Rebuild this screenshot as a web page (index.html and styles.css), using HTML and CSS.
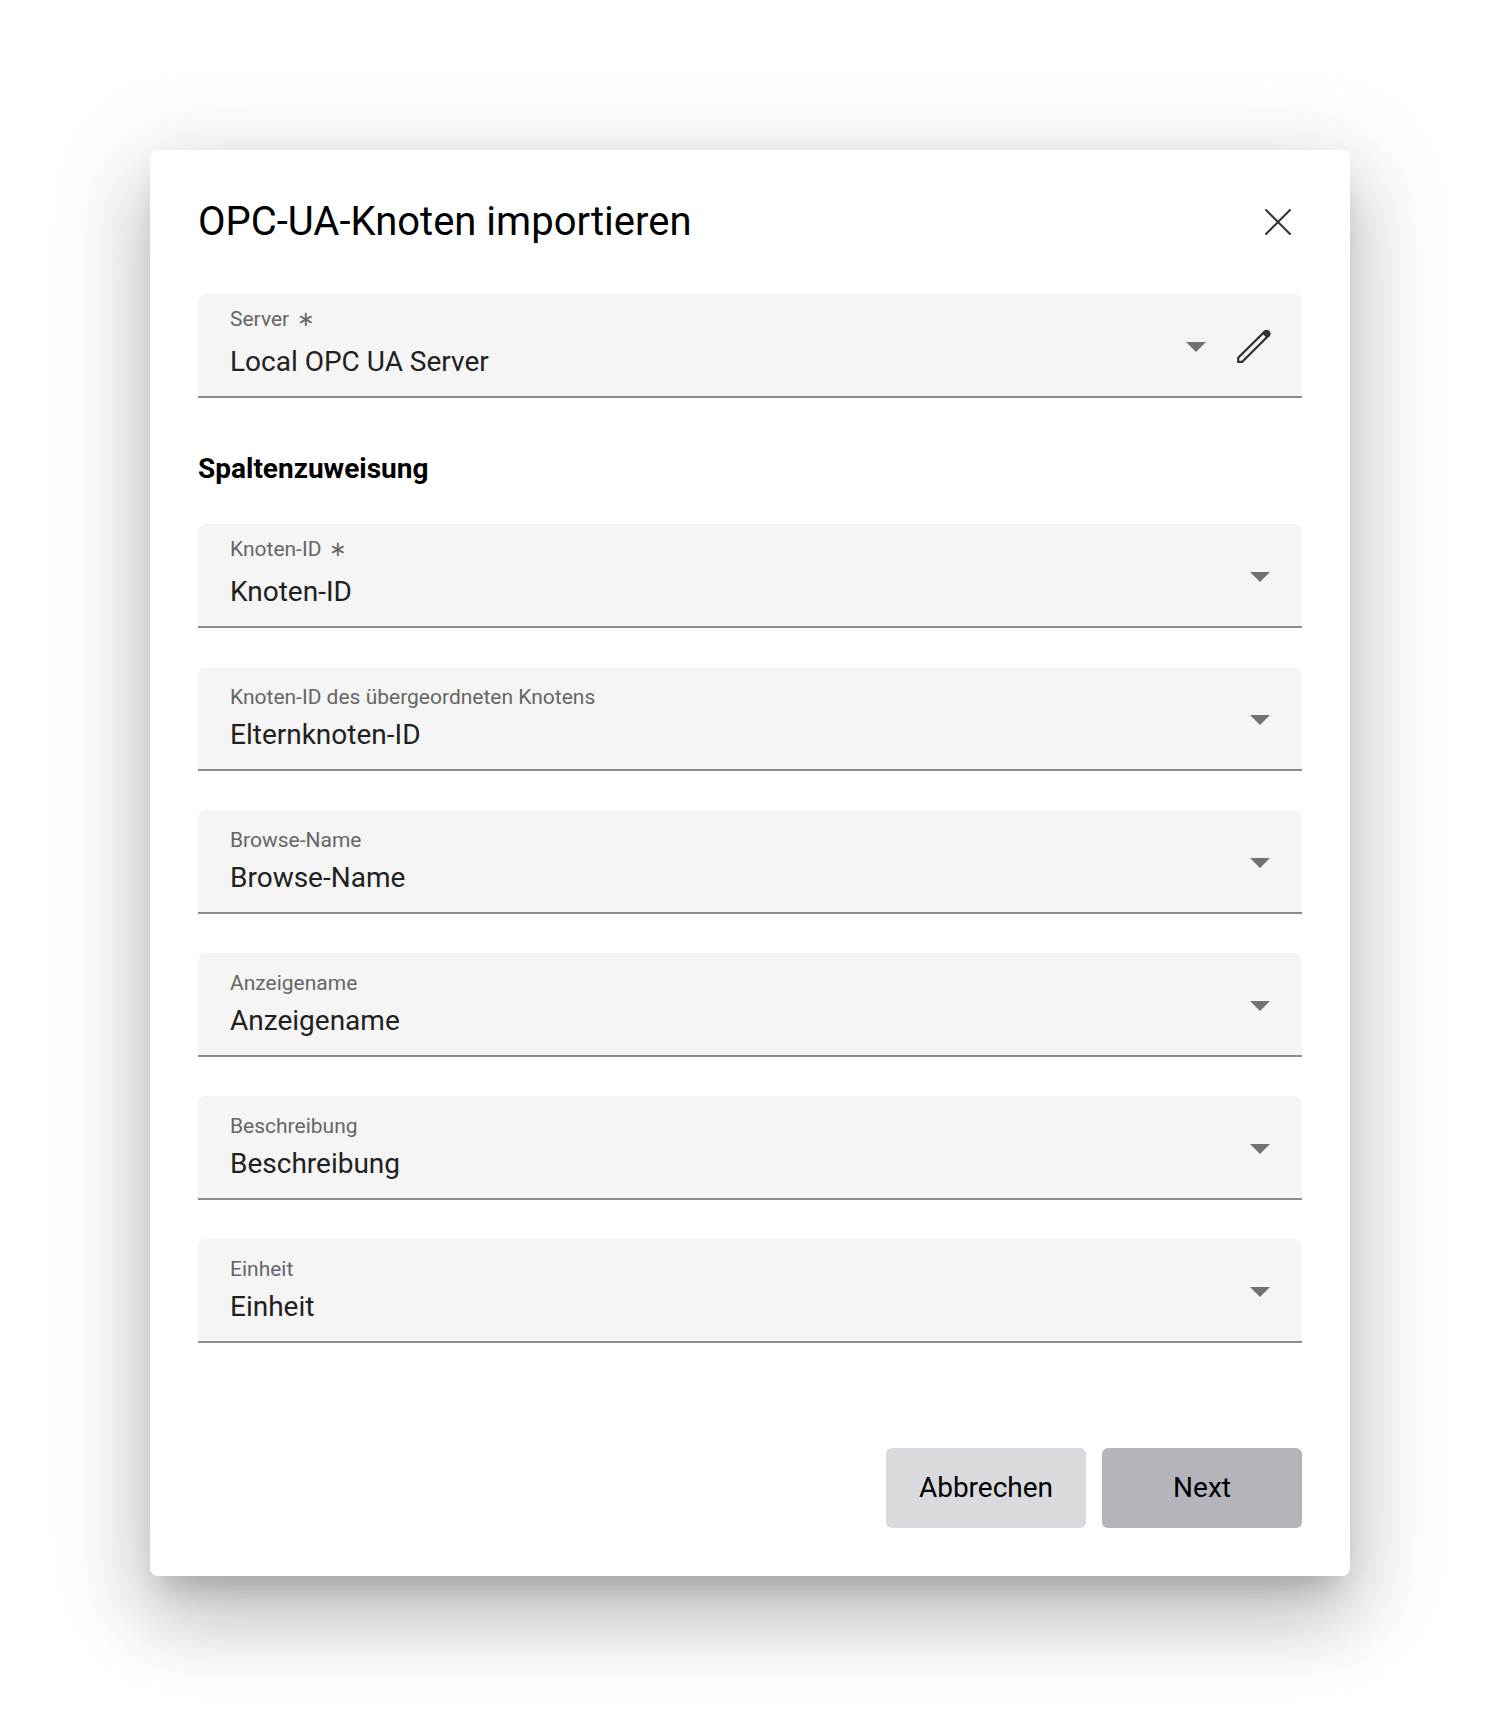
FILE: index.html
```html
<!DOCTYPE html>
<html lang="de">
<head>
<meta charset="utf-8">
<meta name="viewport" content="width=device-width, initial-scale=1">
<title>OPC-UA-Knoten importieren</title>
<link rel="stylesheet" href="styles.css">
</head>
<body>
<main class="dialog" role="dialog" aria-labelledby="dialog-title">
  <header class="dialog-header">
    <h1 class="dialog-title" id="dialog-title">OPC-UA-Knoten importieren</h1>
    <button class="icon-button close-button" type="button" aria-label="Schließen">
      <svg width="48" height="48" viewBox="0 0 48 48" fill="none" stroke="#323232" stroke-width="2" stroke-linecap="round"><path d="M12 12 36 36M36 12 12 36"/></svg>
    </button>
  </header>
  <form class="dialog-form">
    <div class="field field-required field-with-action">
      <label class="field-label" for="server">Server<span class="star">∗</span></label>
      <select class="field-select" id="server" required><option>Local OPC UA Server</option></select>
      <svg class="field-arrow" width="20" height="10" viewBox="0 0 20 10"><path d="M0 0h20L10 10z"/></svg>
      <button class="icon-button edit-button" type="button" aria-label="Bearbeiten">
        <svg width="36" height="36" viewBox="0 0 36 36"><path fill="none" stroke="#323232" stroke-width="2.200" d="M2.200 33.800v-4L28.600 3.600a2.900 2.900 0 0 1 4 4L6.200 33.800z"/><path fill="#323232" d="M25.900 5 28.400 2.500a4 4 0 0 1 5.500 5.500L30.900 10.200z"/></svg>
      </button>
    </div>
    <h2 class="section-title">Spaltenzuweisung</h2>
    <div class="field field-required">
      <label class="field-label" for="node-id">Knoten-ID<span class="star">∗</span></label>
      <select class="field-select" id="node-id" required><option>Knoten-ID</option></select>
      <svg class="field-arrow" width="20" height="10" viewBox="0 0 20 10"><path d="M0 0h20L10 10z"/></svg>
    </div>
    <div class="field">
      <label class="field-label" for="parent-id">Knoten-ID des übergeordneten Knotens</label>
      <select class="field-select" id="parent-id"><option>Elternknoten-ID</option></select>
      <svg class="field-arrow" width="20" height="10" viewBox="0 0 20 10"><path d="M0 0h20L10 10z"/></svg>
    </div>
    <div class="field">
      <label class="field-label" for="browse-name">Browse-Name</label>
      <select class="field-select" id="browse-name"><option>Browse-Name</option></select>
      <svg class="field-arrow" width="20" height="10" viewBox="0 0 20 10"><path d="M0 0h20L10 10z"/></svg>
    </div>
    <div class="field">
      <label class="field-label" for="display-name">Anzeigename</label>
      <select class="field-select" id="display-name"><option>Anzeigename</option></select>
      <svg class="field-arrow" width="20" height="10" viewBox="0 0 20 10"><path d="M0 0h20L10 10z"/></svg>
    </div>
    <div class="field">
      <label class="field-label" for="description">Beschreibung</label>
      <select class="field-select" id="description"><option>Beschreibung</option></select>
      <svg class="field-arrow" width="20" height="10" viewBox="0 0 20 10"><path d="M0 0h20L10 10z"/></svg>
    </div>
    <div class="field">
      <label class="field-label" for="unit">Einheit</label>
      <select class="field-select" id="unit"><option>Einheit</option></select>
      <svg class="field-arrow" width="20" height="10" viewBox="0 0 20 10"><path d="M0 0h20L10 10z"/></svg>
    </div>
    <footer class="dialog-actions">
      <button class="button button-secondary" type="button">Abbrechen</button>
      <button class="button button-primary" type="submit">Next</button>
    </footer>
  </form>
</main>
</body>
</html>
```
FILE: styles.css
```css
*, *::before, *::after { box-sizing: border-box; }

body {
  margin: 0;
  padding: 150px;
  background: #fff;
  color: #000;
  font-family: Roboto, "Liberation Sans", sans-serif;
}

.dialog {
  padding: 48px;
  border-radius: 8px;
  background: #fff;
  box-shadow:
    0 22px 30px -14px rgba(0, 0, 0, .2),
    0 48px 76px 6px rgba(0, 0, 0, .14),
    0 18px 92px 16px rgba(0, 0, 0, .12);
}

.dialog-header {
  display: flex;
  align-items: center;
  justify-content: space-between;
  margin-bottom: 48px;
}

.dialog-title {
  margin: 0;
  font-size: 40px;
  font-weight: 400;
  line-height: 48px;
}

.icon-button {
  display: block;
  padding: 0;
  border: 0;
  background: none;
  cursor: pointer;
}

.icon-button svg { display: block; }

.edit-button { margin-top: 2px; }

.dialog-form {
  display: flex;
  flex-direction: column;
  gap: 39px;
}

.section-title {
  margin: 16px 0 0;
  font-size: 28px;
  font-weight: 700;
  line-height: 32px;
}

/* Label, select and arrow share one grid cell */
.field {
  display: grid;
  grid-template-columns: 1fr;
  align-items: center;
  border-bottom: 2px solid #8c8c8c;
  border-radius: 8px 8px 0 0;
  background: #f5f5f5;
}

.field-with-action {
  grid-template-columns: 1fr auto;
  padding-right: 30px;
}

.field-label,
.field-select,
.field-arrow { grid-area: 1 / 1; }

.field-label {
  z-index: 1;
  align-self: start;
  padding: 18px 0 0 32px;
  color: #666;
  font-size: 21px;
  line-height: 24px;
  pointer-events: none;
}

.field-required .field-label {
  display: flex;
  gap: 8px;
  padding-top: 13px;
}

.field-select {
  appearance: none;
  width: 100%;
  height: 102px;
  padding: 51px 64px 18px 32px;
  border: 0;
  border-radius: 0;
  background: none;
  color: #212121;
  font: 400 28px/33px Roboto, "Liberation Sans", sans-serif;
}

.field-arrow {
  z-index: 1;
  justify-self: end;
  margin: 4px 32px 0 0;
  fill: #717171;
  pointer-events: none;
}

.field-with-action .field-arrow { margin-right: 30px; }

.dialog-actions {
  display: flex;
  justify-content: flex-end;
  gap: 16px;
  margin-top: 66px;
}

.button {
  min-width: 200px;
  height: 80px;
  padding: 0 32px;
  border: 0;
  border-radius: 6px;
  color: #000;
  font: 400 28px/32px Roboto, "Liberation Sans", sans-serif;
  cursor: pointer;
}

.button-secondary { background: #d9dade; }
.button-primary { background: #b4b5bb; }
```
